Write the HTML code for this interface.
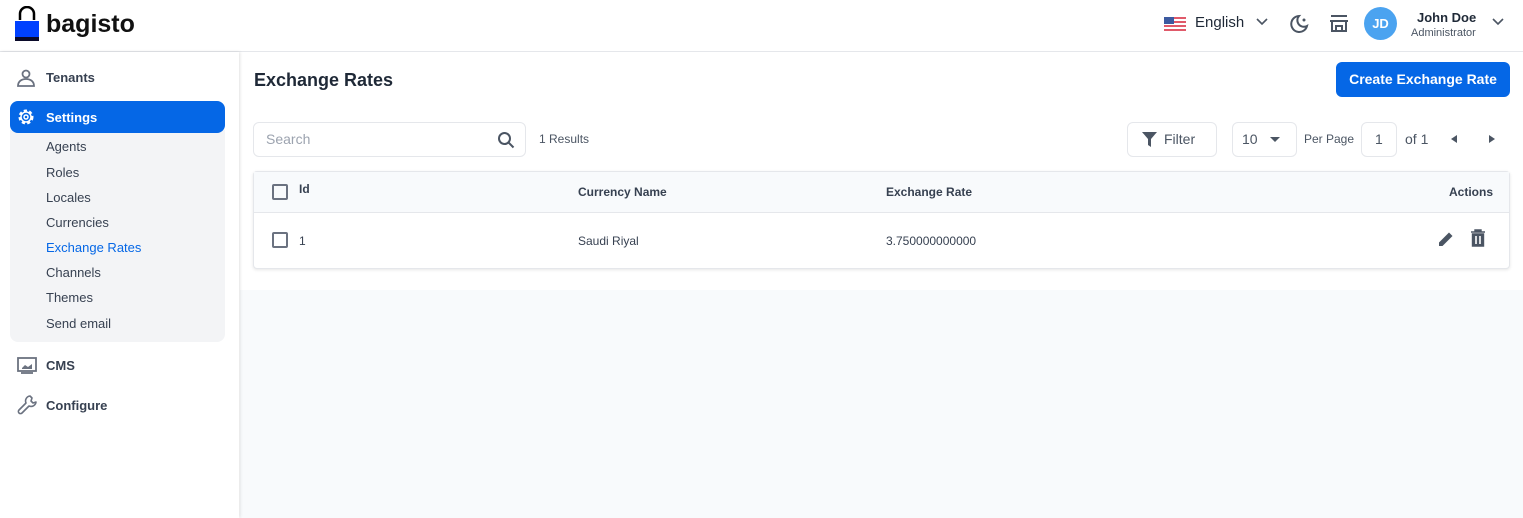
<!DOCTYPE html>
<html><head><meta charset="utf-8"><style>
*{box-sizing:border-box;margin:0;padding:0}
body{width:1523px;height:518px;overflow:hidden;font-family:"Liberation Sans",sans-serif;background:#fff;color:#1f2937;position:relative}
.abs{position:absolute}
.hdr{left:0;top:0;width:1523px;height:52px;border-bottom:1px solid #e5e7eb;background:#fff}
.side{left:0;top:52px;width:239px;height:466px;background:#fff;box-shadow:1px 0 3px rgba(0,0,0,.12)}
.main{left:240px;top:52px;width:1283px;height:466px;background:#f8fafc}
.white{left:240px;top:52px;width:1283px;height:238px;background:#fff}
.nav{font-size:13px;font-weight:bold;color:#374151}
.sub{font-size:13px;color:#374151}
.box{border:1px solid #e5e7eb;border-radius:6px;background:#fff}
.th{font-size:12px;font-weight:bold;color:#374151}
.td{font-size:12px;color:#374151}
.cb{width:16px;height:16px;border:2px solid #6b7280;border-radius:2px}
</style></head><body>
<div class="abs main"></div>
<div class="abs white"></div>
<div class="abs hdr"></div>
<svg class="abs" style="left:14px;top:6px" width="26" height="36" viewBox="0 0 26 36"><path d="M6 14V8a7 7 0 0 1 14 0v6" fill="none" stroke="#000" stroke-width="2.5"/><rect x="1" y="15" width="24" height="18" fill="#0041ff"/><rect x="1" y="31" width="24" height="4" fill="#0a0a2a"/></svg>
<div class="abs" style="left:46px;top:10px;font-size:25px;font-weight:bold;color:#111">bagisto</div>
<svg class="abs" style="left:1164px;top:17px" width="22" height="14"><rect width="22" height="14" fill="#e05a6a"/><rect y="2" width="22" height="2" fill="#fff"/><rect y="6" width="22" height="2" fill="#fff"/><rect y="10" width="22" height="2" fill="#fff"/><rect width="10" height="7" fill="#3c5aa0"/></svg>
<div class="abs" style="left:1195px;top:14px;font-size:15px;color:#1f2937">English</div>
<svg class="abs" style="left:1255px;top:17px" width="14" height="10"><path d="M2 2l5 5 5-5" fill="none" stroke="#4b5563" stroke-width="1.6"/></svg>
<svg class="abs" style="left:1288px;top:13px" width="22" height="22" viewBox="0 0 22 22"><path d="M11 3a8 8 0 1 0 8 10 6.5 6.5 0 0 1-8-10z" fill="none" stroke="#4b5563" stroke-width="2"/><circle cx="16" cy="7" r="1.5" fill="#4b5563"/></svg>
<svg class="abs" style="left:1329px;top:14px" width="20" height="18" viewBox="0 0 20 18"><path d="M2 2h16M1 7h18M3 7v10h14V7M7 17v-5h6v5" fill="none" stroke="#4b5563" stroke-width="2"/></svg>
<div class="abs" style="left:1364px;top:7px;width:33px;height:33px;border-radius:50%;background:#4ba3f0;color:#fff;font-size:13px;font-weight:bold;text-align:center;line-height:33px">JD</div>
<div class="abs" style="left:1417px;top:10px;font-size:13px;font-weight:bold;color:#1f2937">John Doe</div>
<div class="abs" style="left:1411px;top:27px;font-size:11px;color:#4b5563">Administrator</div>
<svg class="abs" style="left:1491px;top:17px" width="14" height="10"><path d="M2 2l5 5 5-5" fill="none" stroke="#4b5563" stroke-width="1.6"/></svg>
<div class="abs side"></div>
<svg class="abs" style="left:16px;top:68px" width="20" height="20" viewBox="0 0 20 20"><circle cx="10" cy="6" r="3.5" fill="none" stroke="#6b7280" stroke-width="1.8"/><path d="M2 18c0-5 4-7 8-7s8 2 8 7z" fill="none" stroke="#6b7280" stroke-width="1.8"/></svg>
<div class="abs nav" style="left:46px;top:70px">Tenants</div>
<div class="abs" style="left:10px;top:130px;width:215px;height:212px;background:#f3f4f6;border-radius:0 0 8px 8px"></div>
<div class="abs" style="left:10px;top:101px;width:215px;height:32px;background:#0567e6;border-radius:8px"></div>
<svg class="abs" style="left:17px;top:108px" width="18" height="18" viewBox="0 0 18 18"><circle cx="9" cy="9" r="6" fill="none" stroke="#fff" stroke-width="3" stroke-dasharray="3 2.2"/><circle cx="9" cy="9" r="5" fill="none" stroke="#fff" stroke-width="1.5"/><circle cx="9" cy="9" r="2" fill="none" stroke="#fff" stroke-width="1.5"/></svg>
<div class="abs nav" style="left:46px;top:110px;color:#fff">Settings</div>
<div class="abs sub" style="left:46px;top:139px">Agents</div>
<div class="abs sub" style="left:46px;top:165px">Roles</div>
<div class="abs sub" style="left:46px;top:190px">Locales</div>
<div class="abs sub" style="left:46px;top:215px">Currencies</div>
<div class="abs sub" style="left:46px;top:240px;color:#0567e6">Exchange Rates</div>
<div class="abs sub" style="left:46px;top:265px">Channels</div>
<div class="abs sub" style="left:46px;top:290px">Themes</div>
<div class="abs sub" style="left:46px;top:316px">Send email</div>
<svg class="abs" style="left:17px;top:357px" width="20" height="17" viewBox="0 0 20 17"><rect x="1" y="1" width="18" height="13" fill="none" stroke="#6b7280" stroke-width="1.8"/><path d="M5 11l3-3 3 2 4-3v5H5z" fill="#6b7280"/><path d="M4 16h12" stroke="#6b7280" stroke-width="1.8"/></svg>
<div class="abs nav" style="left:46px;top:358px">CMS</div>
<svg class="abs" style="left:16px;top:394px" width="22" height="22" viewBox="0 0 22 22"><path d="M14 2a5 5 0 0 0-4 7L3 16a2 2 0 0 0 3 3l7-7a5 5 0 0 0 7-4l-3 1-2-2 1-3z" fill="none" stroke="#6b7280" stroke-width="1.6" stroke-linejoin="round"/></svg>
<div class="abs nav" style="left:46px;top:398px">Configure</div>
<div class="abs" style="left:254px;top:70px;font-size:18px;font-weight:bold;color:#1f2937">Exchange Rates</div>
<div class="abs" style="left:1336px;top:62px;width:174px;height:35px;background:#0567e6;border-radius:6px;color:#fff;font-size:14px;font-weight:bold;text-align:center;line-height:35px">Create Exchange Rate</div>
<div class="abs box" style="left:253px;top:122px;width:273px;height:35px"></div>
<div class="abs" style="left:266px;top:131px;font-size:14px;color:#9ca3af">Search</div>
<svg class="abs" style="left:497px;top:131px" width="18" height="18" viewBox="0 0 18 18"><circle cx="7.5" cy="7.5" r="5.5" fill="none" stroke="#4b5563" stroke-width="2"/><path d="M11.5 11.5l5 5" stroke="#4b5563" stroke-width="2"/></svg>
<div class="abs" style="left:539px;top:132px;font-size:12px;color:#4b5563">1 Results</div>
<div class="abs box" style="left:1127px;top:122px;width:90px;height:35px"></div>
<svg class="abs" style="left:1141px;top:131px" width="17" height="17" viewBox="0 0 17 17"><path d="M1 1h15l-6 7v8l-3-2V8z" fill="#4b5563"/></svg>
<div class="abs" style="left:1164px;top:131px;font-size:14px;color:#4b5563">Filter</div>
<div class="abs box" style="left:1232px;top:122px;width:65px;height:35px"></div>
<div class="abs" style="left:1242px;top:131px;font-size:14px;color:#4b5563">10</div>
<svg class="abs" style="left:1270px;top:137px" width="10" height="6"><path d="M0 0h10L5 5z" fill="#4b5563"/></svg>
<div class="abs" style="left:1304px;top:132px;font-size:12px;color:#4b5563">Per Page</div>
<div class="abs box" style="left:1361px;top:122px;width:36px;height:35px"></div>
<div class="abs" style="left:1375px;top:131px;font-size:14px;color:#4b5563">1</div>
<div class="abs" style="left:1405px;top:131px;font-size:14px;color:#4b5563">of 1</div>
<svg class="abs" style="left:1451px;top:135px" width="6" height="8"><path d="M6 0v8L0 4z" fill="#4b5563"/></svg>
<svg class="abs" style="left:1489px;top:135px" width="6" height="8"><path d="M0 0v8l6-4z" fill="#4b5563"/></svg>
<div class="abs" style="left:253px;top:171px;width:1257px;height:98px;border:1px solid #e5e7eb;border-radius:4px;background:#fff;box-shadow:0 1px 3px rgba(0,0,0,.1)"></div>
<div class="abs" style="left:254px;top:172px;width:1255px;height:41px;background:#f8fafc;border-bottom:1px solid #e5e7eb"></div>
<div class="abs cb" style="left:272px;top:184px"></div>
<div class="abs th" style="left:299px;top:182px">Id</div>
<div class="abs th" style="left:578px;top:185px">Currency Name</div>
<div class="abs th" style="left:886px;top:185px">Exchange Rate</div>
<div class="abs th" style="left:1449px;top:185px">Actions</div>
<div class="abs cb" style="left:272px;top:232px"></div>
<div class="abs td" style="left:299px;top:234px">1</div>
<div class="abs td" style="left:578px;top:234px">Saudi Riyal</div>
<div class="abs td" style="left:886px;top:234px">3.750000000000</div>
<svg class="abs" style="left:1437px;top:230px" width="18" height="18" viewBox="0 0 18 18"><path d="M2 16v-3.5L12 2.5l3.5 3.5L5.5 16z" fill="#4b5563"/></svg>
<svg class="abs" style="left:1470px;top:229px" width="16" height="18" viewBox="0 0 16 18"><path d="M1 3h14M5 3V1h6v2M2.5 5h11v12h-11z" fill="#4b5563" stroke="#4b5563" stroke-width="1.4"/><path d="M6 7v8M10 7v8" stroke="#fff" stroke-width="1.6"/></svg>
</body></html>
